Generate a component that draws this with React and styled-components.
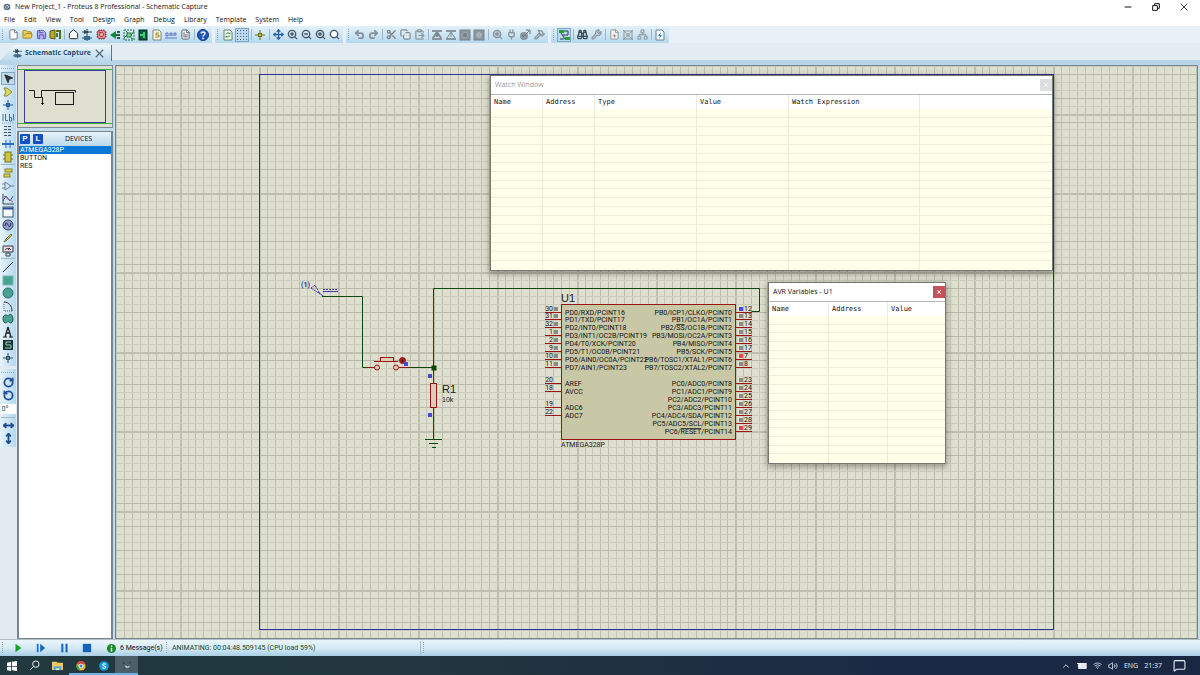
import React from "react";
import styled, { createGlobalStyle, css } from "styled-components";
import {
  File, FolderOpen, Save, House, Cpu, FileText, Move, ZoomIn, ZoomOut, Search,
  Undo2, Redo2, Scissors, Copy, ClipboardPaste, Hammer, Binoculars, Wrench,
  FilePlus, Wifi, Volume2, ChevronUp, MessageSquare, MousePointer2, RotateCw,
  RotateCcw, MoveHorizontal, MoveVertical, Plug, Network,
} from "lucide-react";

const ui = `"Open Sans", "Noto Sans", sans-serif`;
const sans = `"Liberation Sans", Arial, sans-serif`;
const narrow = `Roboto, "Liberation Sans", sans-serif`;
const mono = `"DejaVu Sans Mono", "Liberation Mono", monospace`;

const Global = createGlobalStyle`
  * { box-sizing: border-box; }
  html, body, #root { height: 100%; }
  body { margin: 0; background: #fff; color: #111; font-family: ${ui}; font-size: 7px; line-height: 10px; overflow: hidden; }
  button, input { font: inherit; color: inherit; margin: 0; padding: 0; border: 0; background: none; }
  svg { display: block; flex: none; }
  ul { list-style: none; margin: 0; padding: 0; }
`;

const Page = styled.div`
  min-height: 100vh;
  display: flex;
  flex-direction: column;
`;

const TitleBar = styled.header`
  height: 14px;
  display: flex;
  align-items: center;
  gap: 4px;
  padding-left: 3px;
`;
const Title = styled.h1`
  margin: 0;
  flex: 1;
  font-size: 7px;
  font-weight: 400;
`;
const WindowButtons = styled.div`
  display: flex;
  padding-right: 2px;
`;
const WindowButton = styled.button`
  width: 28px;
  height: 14px;
  display: grid;
  place-items: center;
`;

const MenuBar = styled.nav`
  height: 12px;
  display: flex;
  align-items: center;
  gap: 9px;
  padding-left: 4px;
`;
const MenuItem = styled.button`
  line-height: 12px;
`;

const Toolbar = styled.div`
  height: 17px;
  display: flex;
  gap: 3px;
  background: #e8f0f8;
`;
const ToolGroup = styled.div`
  display: flex;
  align-items: center;
  padding-right: 2px;
  background: linear-gradient(#e3f1fa, #c9e3f3 60%, #b4d8ee);
`;
const Grip = styled.span`
  width: 2px;
  height: 12px;
  margin: 0 2px;
  background: repeating-linear-gradient(#8fa9bd 0 1px, transparent 1px 2px) 0 0 / 1px 100% no-repeat;
`;
const ToolButton = styled.button`
  width: 14px;
  height: 14px;
  display: grid;
  place-items: center;
  color: ${(p) => p.$color || "#4a5866"};
  ${(p) => p.$pressed && css`
    background: #bcd9ee;
    box-shadow: inset 0 0 0 1px #7fa6c4;
  `}
`;
const Divider = styled.span`
  width: 1px;
  height: 11px;
  margin: 0 1px 0 2px;
  background: #9db7ca;
`;

const TabRow = styled.div`
  height: 22px;
  padding-top: 2px;
  background: #e4ecf3;
  border-bottom: 5px solid #b9d6e9;
`;
const Tab = styled.div`
  width: 112px;
  height: 16px;
  display: flex;
  align-items: center;
  gap: 3px;
  padding: 0 7px 0 13px;
  color: #1f4d6e;
  background: linear-gradient(#eef7fc, #b9d9ec);
  border-right: 1px solid #55758c;
  clip-path: polygon(0 100%, 14px 0, 100% 0, 100% 100%);
`;
const TabName = styled.button`
  flex: 1;
  text-align: left;
  font-size: 7px;
  font-weight: 700;
  white-space: nowrap;
`;

const Main = styled.main`
  flex: 1;
  min-height: 0;
  display: flex;
  background: #c3dcec;
`;

const Palette = styled.aside`
  width: 17px;
  background: #e2eaf2;
`;
const PaletteGroup = styled.div`
  width: 16px;
  display: flex;
  flex-direction: column;
  align-items: center;
  padding-bottom: 2px;
  margin-bottom: 3px;
  background: linear-gradient(90deg, #e6f3fb, #b4d8ee);
`;
const PaletteGrip = styled.span`
  width: 14px;
  height: 1px;
  margin: 3px 0;
  background: repeating-linear-gradient(90deg, #8fa9bd 0 1px, transparent 1px 2px);
`;
const PaletteButton = styled.button`
  width: 14px;
  height: 13px;
  display: grid;
  place-items: center;
  color: ${(p) => p.$color || "#3a4654"};
  ${(p) => p.$pressed && css`
    background: #c2d9ea;
    box-shadow: inset 0 0 0 1px #86a4bb;
  `}
`;
const PaletteDivider = styled.span`
  width: 14px;
  height: 1px;
  margin: 1px 0;
  background: #9db7ca;
`;
const AngleInput = styled.input`
  width: 15px;
  height: 10px;
  margin: 2px 0;
  padding-left: 1px;
  background: #fff;
`;

const Side = styled.section`
  width: 96px;
  display: flex;
  flex-direction: column;
  gap: 3px;
`;
const Overview = styled.div`
  height: 63px;
  background: #dfdfd0;
  border: 1px solid #7b8b96;
`;
const Devices = styled.div`
  flex: 1;
  display: flex;
  flex-direction: column;
  background: #fff;
  border: 1px solid #76858f;
  border-width: 1px 2px 1px 2px;
`;
const DevicesHead = styled.div`
  height: 14px;
  display: flex;
  align-items: center;
  gap: 3px;
  padding-left: 1px;
  background: linear-gradient(#e9f4fb, #b9d9ec);
`;
const LetterButton = styled.button`
  width: 10px;
  height: 10px;
  border-radius: 1px;
  background: #1250c4;
  color: #fff;
  font: 700 8px/10px ${sans};
`;
const DevicesTitle = styled.h2`
  flex: 1;
  margin: 0;
  text-align: center;
  font-size: 7px;
  font-weight: 400;
`;
const DeviceButton = styled.button`
  display: block;
  width: 100%;
  height: 8px;
  padding-left: 1px;
  text-align: left;
  font: 7px/8px ${narrow};
  ${(p) => p.$selected && css`
    background: #0a78d6;
    color: #fff;
  `}
`;

const Canvas = styled.div`
  position: relative;
  flex: 1;
  margin: 0 2px 0 2px;
  overflow: hidden;
  background: #dfdfd0;
  border: 1px solid #74858f;
  svg.sheet { position: absolute; inset: 0; }
`;

const FloatingWindow = styled.section`
  position: absolute;
  left: ${(p) => p.$x}px;
  top: ${(p) => p.$y}px;
  width: ${(p) => p.$w}px;
  height: ${(p) => p.$h}px;
  display: flex;
  flex-direction: column;
  background: #fff;
  border: 1px solid #77776e;
  box-shadow: 0 2px 6px 1px rgba(40, 40, 30, 0.4);
`;
const WindowHead = styled.div`
  flex: none;
  height: 19px;
  display: flex;
  align-items: center;
  justify-content: space-between;
  padding-left: 4px;
  border-bottom: 1px solid #b4b4b4;
  font-family: ${ui};
  color: ${(p) => (p.$active ? "#111" : "#9a9a9a")};
`;
const CloseButton = styled.button`
  width: 12px;
  height: 12px;
  display: grid;
  place-items: center;
  color: ${(p) => (p.$active ? "#fff" : "#f4f4f4")};
  background: ${(p) => (p.$active ? "#c8505a" : "#dedede")};
`;
const Grid = styled.table`
  width: 100%;
  table-layout: fixed;
  border-collapse: separate;
  border-spacing: 0;
  font: 7px/10px ${mono};
  background: #fffee9;
  th {
    height: 14px;
    padding: 0 3px;
    text-align: left;
    font-weight: 400;
    background: #fff;
    white-space: nowrap;
    overflow: hidden;
  }
  td { height: 8px; padding: 0; border-bottom: 1px solid #efeedd; }
  th + th, td + td { border-left: 1px solid #ebebe2; }
  tr:last-child td { border-bottom: 0; }
`;
const TableArea = styled.div`
  flex: 1;
  min-height: 0;
  display: grid;
`;

const StatusBar = styled.div`
  height: 17px;
  display: flex;
  align-items: center;
  border-top: 1px solid #b3bfc4;
  background: linear-gradient(#eaf5fb, #d5eaf5 50%, #a9cfe6);
  font: 7px/10px ${narrow};
`;
const SimButton = styled.button`
  width: 23px;
  height: 14px;
  display: grid;
  place-items: center;
`;
const Messages = styled.button`
  display: flex;
  align-items: center;
  gap: 4px;
  width: 57px;
  margin-left: 9px;
  white-space: nowrap;
`;
const StatusText = styled.output`
  width: 250px;
  margin-left: 1px;
  padding-left: 1px;
  line-height: 14px;
  color: #1d4a2c;
  border-right: 1px solid #a3bccb;
`;

const Taskbar = styled.footer`
  height: 19px;
  display: flex;
  align-items: center;
  justify-content: space-between;
  color: #e8edf2;
  background: linear-gradient(90deg, #22393f, #20353f 40%, #1a2a45 75%, #1a2743);
`;
const TaskSide = styled.div`
  display: flex;
  align-items: center;
  gap: ${(p) => p.$gap || 0}px;
  padding-right: ${(p) => p.$end || 0}px;
`;
const TaskButton = styled.button`
  width: 23px;
  height: 19px;
  display: grid;
  place-items: center;
  background: ${(p) => (p.$active ? "#4c6068" : "none")};
  ${(p) => p.$running && css`box-shadow: inset 0 -2px 0 #6cb2ea;`}
`;
const NoticeButton = styled.button`
  margin-left: 5px;
`;

/* Small twelve-unit drawings used by the toolbars */
const G = ({ children, size = 12 }) => (
  <svg width={size} height={size} viewBox="0 0 12 12" fill="none" aria-hidden="true">{children}</svg>
);
const L = (Icon, props = {}) => <Icon size={11} strokeWidth={2} aria-hidden="true" {...props} />;

const Parts = () => (
  <G>
    <path d="M6 0v12M1 3h10M1 9h10" stroke="#26465c" />
    <path d="M3 1l5 2-5 2z" fill="#26465c" />
    <rect x="3" y="7" width="6" height="4" fill="#3c6a86" />
  </G>
);
const Exit = () => (
  <G>
    <path d="M1 2l5-1v9l-5-1z" fill="#b9a824" stroke="#5d5a20" />
    <path d="M7 2h4v8M8 4v4" stroke="#56711f" strokeWidth="2" />
  </G>
);
const Board = () => (
  <G>
    <rect x="1" y="1" width="10" height="10" stroke="#1c7a3a" strokeDasharray="2 1" />
    <path d="M1 9l4-4 2 3 4-6M3 2l3 3M8 9l2 1" stroke="#1c7a3a" />
    <rect x="4" y="4" width="4" height="4" fill="#8fd0a0" stroke="#1c7a3a" />
  </G>
);
const Gerber = () => (
  <G>
    <rect x="2" y="1" width="8" height="10" fill="#0d5c3c" stroke="#0a2b22" />
    <path d="M7 3v6M3 6h3" stroke="#35d07a" strokeWidth="2" />
  </G>
);
const Left3d = () => (
  <G>
    <path d="M1 6l6-4v8z" fill="#0c8a3e" />
    <path d="M7 6h4M8 3l3 0M8 9h3" stroke="#2b5c46" strokeWidth="2" />
  </G>
);
const Bill = () => (
  <G>
    <path d="M2 1h6l2 2v8H2z" fill="#f7f3dc" stroke="#7f8a80" />
    <path d="M8 4H5v2h3v2H4" stroke="#a08a2c" />
  </G>
);
const Source = () => (
  <G>
    <path d="M1 4h2v3H1zM5 7V4h2v3M5 6h2M9 7V4h2v2H9" stroke="#5a77c4" />
    <path d="M0 9h12" stroke="#5a77c4" />
  </G>
);
const Help = () => (
  <G>
    <circle cx="6" cy="6" r="5.5" fill="#1d55bd" stroke="#123a86" />
    <path d="M4.2 4.6C4.2 2.4 8 2.4 8 4.6 8 6 6 6 6 7.6" stroke="#fff" strokeWidth="1.4" />
    <circle cx="6" cy="9.4" r=".9" fill="#fff" />
  </G>
);
const Redraw = () => (
  <G>
    <path d="M2 1h6l2 2v8H2z" fill="#f4fbf4" stroke="#68806e" />
    <path d="M4 5.5c1-2 3-2 4-.5V3.5M8 6.5c-1 2-3 2-4 .5v1.700" stroke="#22933a" />
  </G>
);
const Dots = () => (
  <G>
    {[2, 5, 8, 11].map((y) => <path key={y} d={`M1 ${y - 0.5}h11`} stroke="#44607a" strokeDasharray="1 2" />)}
  </G>
);
const Origin = ({ c = "#6b6b18", f = "#d4c642" }) => (
  <G>
    <path d="M6 1v10M1 6h10" stroke={c} />
    <rect x="4.5" y="4.5" width="3" height="3" fill={f} stroke={c} />
  </G>
);
const Block = ({ variant }) => (
  <G>
    {variant < 2 ? (
      <>
        <path d="M1 2h10M1 10h10" stroke="#8b969e" strokeWidth="2" />
        <path d="M6 3L2 9M6 3l4 6M6 4v4" stroke="#7d8890" strokeWidth={variant ? 1 : 2} />
      </>
    ) : (
      <>
        <rect x="1" y="1" width="10" height="10" fill="#8c979e" stroke="#76818a" />
        <circle cx="6" cy="6" r="2.5" fill={variant === 2 ? "#75808a" : "#a6b0b6"} stroke="#b6c0c6" strokeDasharray="1 1" />
      </>
    )}
  </G>
);
const AutoWire = () => (
  <G>
    <rect x="1" y="1" width="5" height="3" fill="#2c9a3e" />
    <rect x="7" y="8" width="5" height="3" fill="#2c9a3e" />
    <path d="M3 4l4 6M6 2h4v4H5M2 10h4" stroke="#2b3f4c" />
  </G>
);
const Page2 = ({ children }) => (
  <G>
    <path d="M2 1h6l2 2v8H2z" fill="#f6fafc" stroke="#6b8292" />
    {children}
  </G>
);
const CrossBox = () => (
  <G>
    <path d="M2 2h8v8H2zM1 1l10 10M11 1L1 11" stroke="#8a949c" />
    <rect x="4" y="4" width="4" height="4" fill="#a5aeb4" />
  </G>
);
const Bug = () => (
  <G>
    <circle cx="5" cy="7" r="4" fill="#8b969e" />
    <path d="M5 7l5-5M7 1h4v4M3 6l2 2" stroke="#66727b" />
  </G>
);

const toolGroups = [
  [
    ["New", L(File, { fill: "#fff" }), "#6a7680"], ["Open", L(FolderOpen, { fill: "#f0cf58" }), "#9a7a1c"],
    ["Save", L(Save, { fill: "#b9b4ee" }), "#4d4aa6"], ["Close project", <Exit />], "|",
    ["Home", L(House, { fill: "#fff" }), "#1c1c1c"], ["Schematic", <Parts />], ["PCB layout", L(Cpu, { fill: "#f4c4c4" }), "#a01828"],
    ["3D view", <Left3d />], ["Gerber view", <Board />], ["Design explorer", <Gerber />], ["Bill of materials", <Bill />],
    ["Source code", <Source />], ["Notes", L(FileText, { fill: "#eee" }), "#5a646c"], "|", ["Help", <Help />],
  ],
  [
    ["Redraw", <Redraw />], ["Grid", <Dots />, null, true], "|", ["Origin", <Origin />], "|",
    ["Pan", L(Move, { strokeWidth: 3 }), "#2a62a8"], ["Zoom in", L(ZoomIn, { strokeWidth: 3 })], ["Zoom out", L(ZoomOut, { strokeWidth: 3 })],
    ["Zoom all", L(ZoomIn, { fill: "#c8d2d8", strokeWidth: 3 })], ["Zoom area", L(Search, { fill: "#fff", strokeWidth: 3 })],
  ],
  [
    ["Undo", L(Undo2, { strokeWidth: 4 }), "#87939c"], ["Redo", L(Redo2, { strokeWidth: 4 }), "#87939c"], "|",
    ["Cut", L(Scissors, { strokeWidth: 3 }), "#7b868e"], ["Copy", L(Copy, { fill: "#dfe9f0" }), "#5f6f80"],
    ["Paste", L(ClipboardPaste, { strokeWidth: 3 }), "#8f9aa2"], "|",
    ["Block copy", <Block variant={0} />], ["Block move", <Block variant={1} />],
    ["Block rotate", <Block variant={2} />], ["Block delete", <Block variant={3} />], "|",
    ["Pick parts", L(ZoomIn, { fill: "#b8c4cc", strokeWidth: 3 }), "#8a959d"], ["Make device", L(Plug, { strokeWidth: 3 }), "#8a959d"],
    ["Packaging", <Bug />], ["Decompose", L(Hammer, { strokeWidth: 3 }), "#8a959d"],
  ],
  [
    ["Wire autorouter", <AutoWire />, null, true], "|",
    ["Search and tag", L(Binoculars, { strokeWidth: 3 }), "#3e4c58"], ["Property assignment", L(Wrench, { strokeWidth: 3 }), "#8f9ba4"], "|",
    ["New sheet", L(FilePlus, { fill: "#f8f4f0" }), "#8b8f94"], ["Remove sheet", <CrossBox />],
    ["Exit to parent", L(Network, { strokeWidth: 3 }), "#9aa4ac"], "|",
    ["Electrical rules", <Page2><path d="M7 3L4 7h2l-1 3 3-4H6z" fill="#2582ae" /></Page2>],
  ],
];

const Gate = () => <G><path d="M2 2l3 0 5 4-5 4-3 0 2-4z" fill="#e4db5e" stroke="#8c8a3a" /></G>;
const Label = () => (
  <G>
    <path d="M1 2v7M3.5 2v6.500H6M7.500 2v7h2v-3.500h-2M11.500 2v6.500" stroke="#4d7196" />
    <path d="M0 11h12" stroke="#7f9ab4" strokeDasharray="1 1" />
  </G>
);
const Script = () => <G><path d="M2 1.5h8M2 4.5h8M2 7.5h8M2 10.5h8" stroke="#43525e" strokeDasharray="3 1" /></G>;
const Bus = () => <G><path d="M0 6h12" stroke="#2b6cc0" strokeWidth="2" /><path d="M4 2v8M8 2v8" stroke="#2b6cc0" /></G>;
const Sub = () => <G><rect x="3" y="1" width="6" height="10" fill="#cfc63e" stroke="#75741e" /><path d="M1 4h2M1 8h2M9 4h2M9 8h2" stroke="#75741e" /></G>;
const Term = () => <G><rect x="3" y="2" width="7" height="3" fill="#d9d04a" stroke="#85832a" /><rect x="2" y="7" width="6" height="3" fill="#d9d04a" stroke="#85832a" /></G>;
const PinIcon = () => <G><path d="M3 2l6 4-6 4zM0 4h3M0 8h3M9 6h3" stroke="#6a7f90" /></G>;
const Graph = () => <G><path d="M1 1v10h11" stroke="#34465a" /><path d="M1 8l3-5 4 5 3-5" stroke="#3456c0" /><path d="M2 3l4 3 5 3" stroke="#b04c60" /></G>;
const Tape = () => <G><rect x="1" y="1" width="10" height="10" fill="#f8fbfd" stroke="#3d5570" /><path d="M1 2.5h10" stroke="#2c4a90" strokeWidth="2" /></G>;
const Gen = () => <G><circle cx="6" cy="6" r="5" fill="#8f9bc8" stroke="#39436c" /><path d="M3 7c1-5 2-3 3-1s2 3 3-2" stroke="#1c244c" /></G>;
const Probe = () => <G><path d="M2 10l2-3 5-5 1 1-5 5z" fill="#d9cf5c" stroke="#77722e" /></G>;
const Meter = () => <G><path d="M1 1h10v6H1z" fill="#ecd7dc" stroke="#3c3f48" /><path d="M3 5c1-2 5-2 6 0M6 5l2-2M4 8h4v3H4z" stroke="#3c3f48" /></G>;
const teal = "#4aa392";

const palette = [
  [
    ["Selection", L(MousePointer2, { fill: "#2c3238" }), "#2c3238", true], ["Component", <Gate />],
    ["Junction", <Origin c="#2c5f96" f="#3f74b0" />], ["Wire label", <Label />], ["Text script", <Script />],
    ["Bus", <Bus />], ["Subcircuit", <Sub />], "|",
    ["Terminal", <Term />], ["Device pin", <PinIcon />], ["Graph", <Graph />], ["Tape recorder", <Tape />],
    ["Generator", <Gen />], ["Probe", <Probe />], ["Instruments", <Meter />], "|",
    ["Line", <G><path d="M1 11L11 1" stroke="#333" /></G>],
    ["Box", <G><rect x="1" y="2" width="10" height="9" fill={teal} stroke="#7ab8ac" /></G>],
    ["Circle", <G><circle cx="6" cy="6" r="5" fill={teal} stroke="#2d6f66" /></G>],
    ["Arc", <G><path d="M2 2c5 0 8 4 8 9" stroke="#333" /><path d="M2 2v9h8" stroke="#557" strokeDasharray="1 1" /></G>],
    ["Path", <G><path d="M4 2c2 0 2 2 3 0s4 0 4 4-3 5-4 3-2 1-3 1-3-1-3-4 1-4 3-4z" fill={teal} stroke="#24584f" /></G>],
    ["Text", <G><path d="M6 1L3 11M6 1l3 10M4 7h4" stroke="#222" strokeWidth="1.3" /><path d="M1 11h4M7 11h4" stroke="#222" /></G>],
    ["Symbol", <G><rect x="1" y="1" width="10" height="10" fill="#16312f" /><path d="M9 3H4v3h5v3H3" stroke="#9fd8c4" /></G>],
    ["Marker", <Origin c="#2e5260" f="#5f8f96" />],
  ],
];
const rotateTools = [
  ["Rotate clockwise", L(RotateCw, { strokeWidth: 4 }), "#1f4e9c"],
  ["Rotate anti-clockwise", L(RotateCcw, { strokeWidth: 4 }), "#1f4e9c"],
];
const mirrorTools = [
  ["Mirror horizontally", L(MoveHorizontal, { strokeWidth: 4 }), "#1f4e8c"],
  ["Mirror vertically", L(MoveVertical, { strokeWidth: 4 }), "#1f4e8c"],
];

const renderTools = (items, Button, Sep) =>
  items.map((t, i) =>
    t === "|" ? <Sep key={i} /> : (
      <Button key={i} type="button" aria-label={t[0]} $color={t[2]} $pressed={t[3]}>{t[1]}</Button>
    ));

/* Schematic sheet: the grid counts from the sheet's left edge and from its lowest major line */
const STEP = 7.94;
const MAJOR = "#bfbfb0";
const GridLines = () => {
  const lines = [];
  for (let i = -20; i < 300; i++) {
    const major = i % 10 === 0;
    const x = Math.round(143 + i * STEP);
    lines.push(<rect key={`v${i}`} x={x} y="0" width={major ? 2 : 1} height="100%" fill={major ? MAJOR : i % 3 === 0 ? "#c8c8b8" : "#bebeae"} />);
  }
  for (let i = -70; i < 200; i++) {
    const major = i % 10 === 0;
    const y = Math.round(524 + i * STEP);
    lines.push(<rect key={`h${i}`} x="0" y={y} width="100%" height={major ? 2 : 1} fill={major ? MAJOR : (i + 99) % 3 === 1 ? "#b9b9a9" : "#cdcdbe"} />);
  }
  return <g>{lines}</g>;
};

const leftPins = [
  [0, "30", "PD0/RXD/PCINT16"], [1, "31", "PD1/TXD/PCINT17"], [2, "32", "PD2/INT0/PCINT18"],
  [3, "1", "PD3/INT1/OC2B/PCINT19"], [4, "2", "PD4/T0/XCK/PCINT20"], [5, "9", "PD5/T1/OC0B/PCINT21"],
  [6, "10", "PD6/AIN0/OC0A/PCINT22"], [7, "11", "PD7/AIN1/PCINT23"],
  [9, "20", "AREF"], [10, "18", "AVCC"], [12, "19", "ADC6"], [13, "22", "ADC7"],
];
const over = (a, b, c) => <>{a}<tspan textDecoration="overline">{b}</tspan>{c}</>;
const rightPins = [
  [0, "12", "PB0/ICP1/CLKO/PCINT0", "#4646d8"], [1, "13", "PB1/OC1A/PCINT1"],
  [2, "14", over("PB2/", "SS", "/OC1B/PCINT2")], [3, "15", "PB3/MOSI/OC2A/PCINT3"],
  [4, "16", "PB4/MISO/PCINT4"], [5, "17", "PB5/SCK/PCINT5"],
  [6, "7", "PB6/TOSC1/XTAL1/PCINT6", "#e84a4a"], [7, "8", "PB7/TOSC2/XTAL2/PCINT7"],
  [9, "23", "PC0/ADC0/PCINT8"], [10, "24", "PC1/ADC1/PCINT9"], [11, "25", "PC2/ADC2/PCINT10"],
  [12, "26", "PC3/ADC3/PCINT11"], [13, "27", "PC4/ADC4/SDA/PCINT12"],
  [14, "28", "PC5/ADC5/SCL/PCINT13"], [15, "29", over("PC6/", "RESET", "/PCINT14"), "#d84a50"],
];
const pinY = (row) => Math.round(245.5 + row * STEP);

const Sheet = () => (
  <svg className="sheet" width="100%" height="100%" fontFamily="Roboto, Liberation Sans, sans-serif" fontSize="7" fill="none" role="img" aria-label="Schematic">
    <GridLines />
    <rect x="143.5" y="8.5" width="794" height="555" stroke="#2e2e9a" />
    <g stroke="#0d470d">
      <path d="M206 230.5h40.5v71h6M292 301.5h26M317.5 309v-86.5h326v23h-8M317.5 349v24M309 373.5h17M313 377.5h9M316 381.5h4" />
      <rect x="316" y="300" width="4" height="4" fill="#0d470d" />
    </g>
    <g stroke="#9a1414">
      <path d="M250 301.5h9M283 301.5h10M258 295.5h24M317.5 308v10M317.5 341v10" />
      <circle cx="261" cy="301.5" r="2.5" fill="#dcc8b4" />
      <circle cx="280" cy="301.5" r="2.5" fill="#dcc8b4" />
      <rect x="264.5" y="291.5" width="13" height="4" fill="#dccdb4" />
      <rect x="314.5" y="317.5" width="6" height="24" fill="#dccdb4" />
      <circle cx="286.5" cy="294.5" r="3" fill="#b01818" />
      <path d="M286.5 293v3" stroke="#3c0505" />
    </g>
    <g fill="#4848d0">
      <rect x="288" y="296" width="4" height="4" />
      <rect x="312" y="308" width="4" height="4" />
      <rect x="312" y="347" width="4" height="4" />
    </g>
    <g stroke="#3c3ca4">
      <path d="M195 222l4-3 5 9z" strokeDasharray="2 1" />
      <path d="M202 226l5 4M207 225.5h15" />
      <path d="M207 223.5h15" strokeDasharray="2 1" />
    </g>
    <text x="185" y="221" fill="#2c2c9c" fontWeight="700">(1)</text>
    <g fill="#1c1c1c" fontFamily="Liberation Sans, Arial, sans-serif">
      <text x="326" y="327" fontSize="11">R1</text>
      <text x="326" y="336">10k</text>
      <text x="445" y="236" fontSize="11">U1</text>
    </g>
    <text x="445" y="381" fill="#1c1c1c">ATMEGA328P</text>
    <rect x="445.5" y="238.5" width="174" height="135" fill="#c8c8a6" stroke="#9a1414" />
    {leftPins.map(([row, n, name]) => (
      <g key={n} fill="#111">
        <path d={`M429 ${pinY(row) + 0.5}h16`} stroke="#9a1414" />
        <text x="437" y={pinY(row) - 1} textAnchor="end">{n}</text>
        {row < 8 && <rect x="438" y={pinY(row) - 5} width="4" height="4" fill="#8a8a84" />}
        <text x="449" y={pinY(row) + 3}>{name}</text>
      </g>
    ))}
    {rightPins.map(([row, n, name, color]) => (
      <g key={n} fill="#111">
        <path d={`M620 ${pinY(row) + 0.5}h16`} stroke="#9a1414" />
        <text x="628" y={pinY(row) - 1}>{n}</text>
        <rect x="623" y={pinY(row) - 5} width="4" height="4" fill={color || "#8a8a84"} />
        <text x="616" y={pinY(row) + 3} textAnchor="end">{name}</text>
      </g>
    ))}
  </svg>
);

const VariableTable = ({ columns, rows }) => (
  <Grid>
    <colgroup>{columns.map(([n, w]) => <col key={n} width={w} />)}</colgroup>
    <thead><tr>{columns.map(([n]) => <th key={n} scope="col">{n}</th>)}</tr></thead>
    <tbody>
      {Array.from({ length: rows }, (_, r) => (
        <tr key={r}>{columns.map(([n]) => <td key={n} />)}</tr>
      ))}
    </tbody>
  </Grid>
);

const DebugWindow = ({ title, active, columns, rows, ...box }) => (
  <FloatingWindow aria-label={title} {...box}>
    <WindowHead $active={active}>
      <span>{title}</span>
      <CloseButton type="button" aria-label={`Close ${title}`} $active={active}>
        <G size={6}><path d="M2 2l8 8M10 2l-8 8" stroke="currentColor" strokeWidth="2" /></G>
      </CloseButton>
    </WindowHead>
    <TableArea><VariableTable columns={columns} rows={rows} /></TableArea>
  </FloatingWindow>
);

export default function App() {
  return (
    <Page>
      <Global />
      <TitleBar>
        <G size={8}><circle cx="6" cy="6" r="5" fill="#5f7288" /><path d="M3 8l3-5 3 3-4 3" stroke="#dfe8f0" /></G>
        <Title>New Project_1 - Proteus 8 Professional - Schematic Capture</Title>
        <WindowButtons>
          <WindowButton type="button" aria-label="Minimise"><G size={8}><path d="M1 6h10" stroke="#111" strokeWidth="1.5" /></G></WindowButton>
          <WindowButton type="button" aria-label="Restore"><G size={8}><path d="M1 4h7v7H1zM4 4V1h7v7H8" stroke="#111" strokeWidth="1.5" /></G></WindowButton>
          <WindowButton type="button" aria-label="Close"><G size={8}><path d="M1 1l10 10M11 1L1 11" stroke="#111" strokeWidth="1.2" /></G></WindowButton>
        </WindowButtons>
      </TitleBar>
      <MenuBar>
        {["File", "Edit", "View", "Tool", "Design", "Graph", "Debug", "Library", "Template", "System", "Help"].map((m) => (
          <MenuItem key={m} type="button">{m}</MenuItem>
        ))}
      </MenuBar>
      <Toolbar>
        {toolGroups.map((g, i) => (
          <ToolGroup key={i}><Grip />{renderTools(g, ToolButton, Divider)}</ToolGroup>
        ))}
      </Toolbar>
      <TabRow>
        <Tab>
          <G size={9}><path d="M6 0v12M0 3h12M0 9h12" stroke="#26465c" /><path d="M3 0l6 3-6 3z" fill="#26465c" /><rect x="2" y="7" width="8" height="4" fill="#3c6a86" /></G>
          <TabName type="button">Schematic Capture</TabName>
          <button type="button" aria-label="Close tab"><G size={9}><path d="M1 1l10 10M11 1L1 11" stroke="#4f6474" strokeWidth="1.5" /></G></button>
        </Tab>
      </TabRow>
      <Main>
        <Palette>
          {palette.map((g, i) => (
            <PaletteGroup key={i}><PaletteGrip />{renderTools(g, PaletteButton, PaletteDivider)}</PaletteGroup>
          ))}
          <PaletteGroup>
            <PaletteGrip />
            {renderTools(rotateTools, PaletteButton, PaletteDivider)}
            <AngleInput type="text" aria-label="Angle" defaultValue="0°" />
            <PaletteDivider />
            {renderTools(mirrorTools, PaletteButton, PaletteDivider)}
          </PaletteGroup>
        </Palette>
        <Side>
          <Overview>
            <svg width="94" height="61" fill="none" role="img" aria-label="Sheet overview">
              <path d="M0 3.5h94M0 57.5h94" stroke="#36b336" />
              <rect x="6.5" y="4.5" width="81" height="52" stroke="#3a3aa0" />
              <path d="M11 24.5h5.5v7h7v-7h34v2M24.500 31v8M23 37.5h3" stroke="#1c1c1c" />
              <rect x="37.5" y="26.5" width="18" height="12" stroke="#1c1c1c" />
            </svg>
          </Overview>
          <Devices>
            <DevicesHead>
              <LetterButton type="button">P</LetterButton>
              <LetterButton type="button">L</LetterButton>
              <DevicesTitle>DEVICES</DevicesTitle>
            </DevicesHead>
            <ul>
              {["ATMEGA328P", "BUTTON", "RES"].map((d, i) => (
                <li key={d}><DeviceButton type="button" $selected={i === 0}>{d}</DeviceButton></li>
              ))}
            </ul>
          </Devices>
        </Side>
        <Canvas>
          <Sheet />
          <DebugWindow
            title="Watch Window" $x={374} $y={9} $w={563} $h={196} rows={18}
            columns={[["Name", 51], ["Address", 52], ["Type", 102], ["Value", 92], ["Watch Expression", 131], ["", 133]]}
          />
          <DebugWindow
            title="AVR Variables - U1" active $x={652} $y={216} $w={178} $h={182} rows={17}
            columns={[["Name", 59], ["Address", 59], ["Value", 58]]}
          />
        </Canvas>
      </Main>
      <StatusBar>
        <Grip />
        <SimButton type="button" aria-label="Play"><G size={10}><path d="M3 1l7 5-7 5z" fill="#12a224" /></G></SimButton>
        <SimButton type="button" aria-label="Step"><G size={10}><path d="M2 1v10" stroke="#1766bb" strokeWidth="2" /><path d="M5 1l6 5-6 5z" fill="#1766bb" /></G></SimButton>
        <SimButton type="button" aria-label="Pause"><G size={10}><path d="M4 1v10M9 1v10" stroke="#1766bb" strokeWidth="2.5" /></G></SimButton>
        <SimButton type="button" aria-label="Stop"><G size={10}><rect x="1" y="1" width="10" height="10" fill="#1464bd" /></G></SimButton>
        <Messages type="button">
          <G size={9}><circle cx="6" cy="6" r="6" fill="#148a24" /><path d="M6 5v5M6 2v2" stroke="#fff" strokeWidth="2" /></G>
          6 Message(s)
        </Messages>
        <Grip />
        <StatusText>ANIMATING: 00:04:48.509145 (CPU load 59%)</StatusText>
        <Grip />
      </StatusBar>
      <Taskbar>
        <TaskSide>
          <TaskButton type="button" aria-label="Start"><G size={10}><path d="M0 2l5-1v5H0zM6 1l6-1v6H6zM0 7h5v5l-5-1zM6 7h6v5l-6-1z" fill="#fff" /></G></TaskButton>
          <TaskButton type="button" aria-label="Search"><G size={11}><circle cx="7.5" cy="4.5" r="3.5" stroke="#fff" /><path d="M5 7l-4 4" stroke="#fff" /></G></TaskButton>
          <TaskButton type="button" aria-label="File explorer"><G size={11}><path d="M0 2h5l1 1h6v8H0z" fill="#f2c65c" /><path d="M2 7h8v4H2z" fill="#4fa3dd" /><path d="M4 9h4v2H4z" fill="#f2e2a8" /></G></TaskButton>
          <TaskButton type="button" aria-label="Chrome" $running><G size={10}><circle cx="6" cy="6" r="5.5" fill="#e2b735" /><path d="M.8 4A5.5 5.5 0 0 1 11.300 4H6z" fill="#d84a38" /><path d="M1 3.5l3 5 1 3A5.5 5.5 0 0 1 1 3.5z" fill="#3f9e52" /><circle cx="6" cy="6" r="2.4" fill="#4687e0" stroke="#f4f4f4" /></G></TaskButton>
          <TaskButton type="button" aria-label="Skype" $running><G size={10}><circle cx="6" cy="6" r="5.8" fill="#1599dc" /><path d="M8 4C7 3 4.500 3 4.500 4.600S8 6 8 7.500 5 9 4 8" stroke="#fff" strokeWidth="1.3" /></G></TaskButton>
          <TaskButton type="button" aria-label="Proteus" $active $running><G size={10}><path d="M1 2l2 1M10 1l-1 2M2 10l1-1M10 10l-1-1" stroke="#1a242b" /><path d="M3 5l4 2 3-2-2 3H5z" fill="#cfd8dc" /></G></TaskButton>
        </TaskSide>
        <TaskSide $gap={6} $end={14}>
          {L(ChevronUp, { size: 10 })}
          <G size={10}><rect x="2" y="3" width="9" height="6" fill="#dfe5ea" stroke="#fff" /><path d="M0 3h4v3H1" stroke="#fff" /></G>
          {L(Wifi, { size: 9 })}
          {L(Volume2, { size: 10 })}
          <span>ENG</span>
          <time>21:37</time>
          <NoticeButton type="button" aria-label="Notifications">{L(MessageSquare, { size: 13 })}</NoticeButton>
        </TaskSide>
      </Taskbar>
    </Page>
  );
}
